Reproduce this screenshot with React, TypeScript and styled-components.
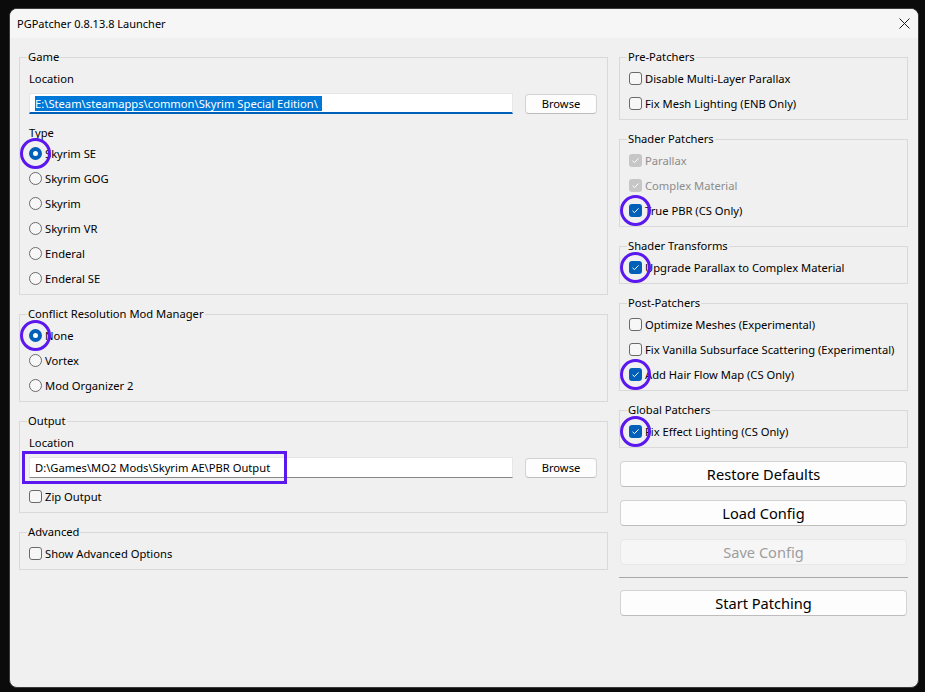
import React from 'react';
import styled, { createGlobalStyle } from 'styled-components';

const GlobalStyle = createGlobalStyle`
  html, body {
    margin: 0;
    background: #0b0b0b;
  }
  body {
    font-family: "Segoe UI", "Noto Sans", sans-serif;
    font-size: 11.2px;
    color: #000;
  }
`;

const ACCENT = '#005fb8';
const MARK = '#5a17ee';

const Window = styled.div`
  margin: 8px 0 0 9px;
  width: 910px;
  height: 680px;
  box-sizing: border-box;
  border: 1px solid #3a3a3a;
  border-radius: 8px;
  background: #f0f0f0;
  overflow: hidden;
  display: flex;
  flex-direction: column;
`;

const TitleBar = styled.div`
  height: 29px;
  flex: none;
  display: flex;
  align-items: center;
  justify-content: space-between;
  padding-left: 7px;
  background: #f6f6f6;
`;

const Title = styled.span`
  font-size: 11px;
  line-height: 16px;
`;

const CloseButton = styled.div`
  width: 28px;
  height: 29px;
  display: flex;
  align-items: center;
  justify-content: center;
`;

const Body = styled.div`
  display: grid;
  grid-template-columns: 589px 289px;
  column-gap: 11px;
  align-items: start;
  padding: 11px 10px 0 9px;
`;

const Column = styled.div`
  display: flex;
  flex-direction: column;
  gap: 11px;
`;

const Group = styled.fieldset`
  margin: 0;
  padding: 1px 9px 3px;
  border: 1px solid #d9d9d9;
  min-width: 0;
`;

const Legend = styled.legend`
  padding: 0 1px;
  margin-left: -2px;
  line-height: 16px;
`;

const FieldLabel = styled.div<{ $top: number }>`
  line-height: 16px;
  margin-top: ${p => p.$top}px;
`;

const PathRow = styled.div`
  display: flex;
  align-items: center;
  gap: 12px;
  margin-top: 6px;
`;

const PathBox = styled.div`
  position: relative;
  width: 484px;
  flex: none;
`;

const PathInput = styled.div<{ $focused?: boolean }>`
  height: 21px;
  box-sizing: border-box;
  background: #fff;
  border: 1px solid #e6e6e6;
  border-bottom: ${p => (p.$focused ? `2px solid ${ACCENT}` : '1px solid #868686')};
  padding: 0 5px;
  display: flex;
  align-items: center;
  white-space: nowrap;
  overflow: hidden;
`;

const Selection = styled.span`
  background: #0078d7;
  color: #fff;
  line-height: 15px;
  padding-right: 4px;
`;

const BrowseButton = styled.button`
  width: 72px;
  height: 20px;
  padding: 0;
  font: inherit;
  background: #fdfdfd;
  border: 1px solid #d3d3d3;
  border-bottom-color: #bdbdbd;
  border-radius: 4px;
  color: #000;
`;

const OptionRow = styled.div<{ $top?: number }>`
  position: relative;
  height: 25px;
  display: flex;
  align-items: center;
  gap: 3px;
  margin-top: ${p => p.$top ?? 0}px;
  white-space: nowrap;
`;

const OptionText = styled.span<{ $disabled?: boolean }>`
  line-height: 16px;
  color: ${p => (p.$disabled ? '#8c8c8c' : '#000')};
`;

const RadioDot = styled.span<{ $on?: boolean }>`
  width: 13px;
  height: 13px;
  box-sizing: border-box;
  border-radius: 50%;
  flex: none;
  border: ${p => (p.$on ? `4px solid ${ACCENT}` : '1px solid #6a6a6a')};
  background: ${p => (p.$on ? '#fff' : '#f7f7f7')};
`;

const CheckBox = styled.span<{ $on?: boolean; $disabled?: boolean }>`
  width: 13px;
  height: 13px;
  box-sizing: border-box;
  border-radius: 3px;
  flex: none;
  display: flex;
  align-items: center;
  justify-content: center;
  background: ${p => (p.$disabled ? '#c6c6c6' : p.$on ? ACCENT : '#f7f7f7')};
  border: ${p => (p.$on || p.$disabled ? 'none' : '1px solid #6a6a6a')};
`;

const Ring = styled.span`
  position: absolute;
  left: -9px;
  top: -3px;
  width: 31px;
  height: 31px;
  box-sizing: border-box;
  border: 3px solid ${MARK};
  border-radius: 50%;
  pointer-events: none;
`;

const Outline = styled.span`
  position: absolute;
  left: -7px;
  top: -6px;
  width: 265px;
  height: 33px;
  box-sizing: border-box;
  border: 3px solid ${MARK};
  pointer-events: none;
`;

const ButtonStack = styled.div`
  display: flex;
  flex-direction: column;
  gap: 13px;
  margin-top: 2px;
`;

const ActionButton = styled.button`
  height: 26px;
  margin: 0 1px;
  padding: 0;
  font: inherit;
  font-size: 14.6px;
  color: #000;
  background: #fdfdfd;
  border: 1px solid #d3d3d3;
  border-bottom-color: #bdbdbd;
  border-radius: 4px;

  &:disabled {
    color: #9d9d9d;
    background: #f6f6f6;
    border-color: #e8e8e8;
  }
`;

const Separator = styled.div`
  height: 1px;
  margin: -1px 0;
  background: #a8a8a8;
`;

const Check = () => (
  <svg width="9" height="9" viewBox="0 0 9 9">
    <path d="M1.5 4.8 L3.5 6.6 L7.5 2.4" fill="none" stroke="#fff" strokeWidth="1" />
  </svg>
);

const Radio = ({ label, on, marked, top }: { label: string; on?: boolean; marked?: boolean; top?: number }) => (
  <OptionRow $top={top}>
    <RadioDot $on={on} />
    <OptionText>{label}</OptionText>
    {marked && <Ring />}
  </OptionRow>
);

const Option = ({
  label,
  on,
  disabled,
  marked,
  top,
}: {
  label: string;
  on?: boolean;
  disabled?: boolean;
  marked?: boolean;
  top?: number;
}) => (
  <OptionRow $top={top}>
    <CheckBox $on={on} $disabled={disabled}>
      {(on || disabled) && <Check />}
    </CheckBox>
    <OptionText $disabled={disabled}>{label}</OptionText>
    {marked && <Ring />}
  </OptionRow>
);

const gameTypes = ['Skyrim SE', 'Skyrim GOG', 'Skyrim', 'Skyrim VR', 'Enderal', 'Enderal SE'];
const managers = ['None', 'Vortex', 'Mod Organizer 2'];

export default function App() {
  return (
    <>
      <GlobalStyle />
      <Window>
        <TitleBar>
          <Title>PGPatcher 0.8.13.8 Launcher</Title>
          <CloseButton>
            <svg width="11" height="11" viewBox="0 0 11 11">
              <path d="M0.5 0.5 L10.5 10.5 M10.5 0.5 L0.5 10.5" stroke="#1b1b1b" strokeWidth="1" />
            </svg>
          </CloseButton>
        </TitleBar>
        <Body>
          <Column>
            <Group>
              <Legend>Game</Legend>
              <FieldLabel $top={5}>Location</FieldLabel>
              <PathRow>
                <PathBox>
                  <PathInput $focused>
                    <Selection>E:\Steam\steamapps\common\Skyrim Special Edition\</Selection>
                  </PathInput>
                </PathBox>
                <BrowseButton>Browse</BrowseButton>
              </PathRow>
              <FieldLabel $top={11}>Type</FieldLabel>
              {gameTypes.map((t, i) => (
                <Radio key={t} label={t} on={i === 0} marked={i === 0} />
              ))}
            </Group>

            <Group>
              <Legend>Conflict Resolution Mod Manager</Legend>
              {managers.map((m, i) => (
                <Radio key={m} label={m} on={i === 0} marked={i === 0} />
              ))}
            </Group>

            <Group>
              <Legend>Output</Legend>
              <FieldLabel $top={5}>Location</FieldLabel>
              <PathRow>
                <PathBox>
                  <PathInput>D:\Games\MO2 Mods\Skyrim AE\PBR Output</PathInput>
                  <Outline />
                </PathBox>
                <BrowseButton>Browse</BrowseButton>
              </PathRow>
              <Option label="Zip Output" top={6} />
            </Group>

            <Group>
              <Legend>Advanced</Legend>
              <Option label="Show Advanced Options" />
            </Group>
          </Column>

          <Column>
            <Group>
              <Legend>Pre-Patchers</Legend>
              <Option label="Disable Multi-Layer Parallax" />
              <Option label="Fix Mesh Lighting (ENB Only)" />
            </Group>

            <Group>
              <Legend>Shader Patchers</Legend>
              <Option label="Parallax" disabled />
              <Option label="Complex Material" disabled />
              <Option label="True PBR (CS Only)" on marked />
            </Group>

            <Group>
              <Legend>Shader Transforms</Legend>
              <Option label="Upgrade Parallax to Complex Material" on marked />
            </Group>

            <Group>
              <Legend>Post-Patchers</Legend>
              <Option label="Optimize Meshes (Experimental)" />
              <Option label="Fix Vanilla Subsurface Scattering (Experimental)" />
              <Option label="Add Hair Flow Map (CS Only)" on marked />
            </Group>

            <Group>
              <Legend>Global Patchers</Legend>
              <Option label="Fix Effect Lighting (CS Only)" on marked />
            </Group>

            <ButtonStack>
              <ActionButton>Restore Defaults</ActionButton>
              <ActionButton>Load Config</ActionButton>
              <ActionButton disabled>Save Config</ActionButton>
              <Separator />
              <ActionButton>Start Patching</ActionButton>
            </ButtonStack>
          </Column>
        </Body>
      </Window>
    </>
  );
}
